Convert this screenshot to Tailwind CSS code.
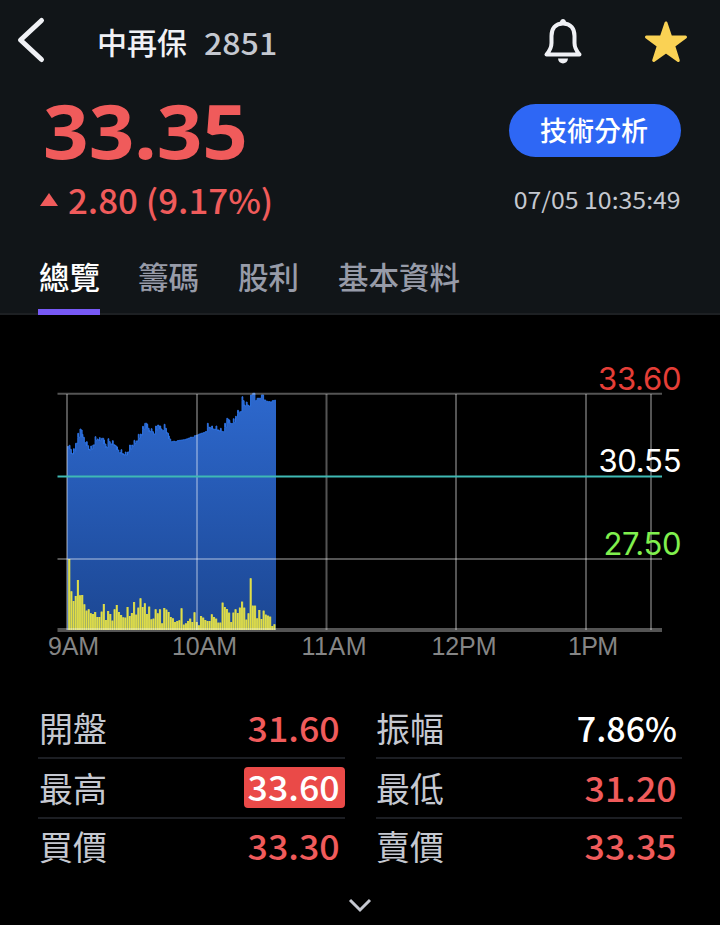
<!DOCTYPE html>
<html lang="zh-Hant">
<head>
    <meta charset="UTF-8">
    <meta name="viewport" content="width=device-width, initial-scale=1.0">
    <title>中再保 2851</title>
    <script src="https://cdn.jsdelivr.net/npm/@tailwindcss/browser@4"></script>
</head>
<body class="w-[720px] h-[925px] overflow-hidden bg-black text-white font-['Noto_Sans_CJK_TC',sans-serif]">
    <header class="h-[315px] bg-[#111518] border-b-2 border-[#1d2023]">
        <!-- title bar -->
        <div class="h-[86px] flex items-center pl-4 pr-8">
            <svg class="w-8 h-12 -mt-1.5" viewBox="0 0 32 48" fill="none" stroke="#f0f1f5" stroke-width="5" stroke-linecap="round" stroke-linejoin="round">
                <path d="M25.5 4.5L4.5 24L25.5 43.500"/>
            </svg>
            <h1 class="ml-[49px] mb-1 text-[30px] leading-none font-medium text-[#f0f1f5]">中再保</h1>
            <span class="ml-[17px] mb-0.5 text-[30px] leading-none font-medium text-[#c5c8d0] w-[73px]"><span class="inline-block origin-left scale-x-[1.07]">2851</span></span>
            <svg class="ml-auto w-10 h-[46px] -mt-1" viewBox="0 0 40 46">
                <path d="M20 5.500C12 5.500 8.500 11 8.500 18V25C8.500 30 7 32.500 3.500 36.500H36.500C33 32.500 31.500 30 31.500 25V18C31.500 11 28 5.500 20 5.500Z" fill="none" stroke="#f0f1f5" stroke-width="4" stroke-linejoin="round"/>
                <path d="M16.800 5C17 -0.300 23 -0.300 23.200 5ZM15 40.500H25C24.500 47 15.500 47 15 40.500Z" fill="#f0f1f5"/>
            </svg>
            <svg class="ml-[61px] mb-0.5 w-11 h-11" viewBox="0 0 44 44" fill="#fad254" stroke="#fad254" stroke-width="3" stroke-linejoin="round">
                <path d="M22 3L26.700 16.900L41.500 17L29.700 25.900L34.300 40.500L22 31.700L9.700 40.500L14.300 25.900L2.500 17L17.300 16.900Z"/>
            </svg>
        </div>

        <!-- price -->
        <div class="flex justify-between pl-10 pr-[39px] h-[154px]">
            <div class="text-[#f05b5b]">
                <div class="h-[92px] flex items-center pb-1"><span class="ml-[3px] inline-block origin-left scale-x-[1.05] text-[76px] leading-none font-bold font-['Noto_Sans']">33.35</span></div>
                <div class="flex items-center h-[43px]">
                    <svg class="w-[18px] h-[13px]" viewBox="0 0 18 13" fill="currentColor"><path d="M9 0L18 13H0Z"/></svg>
                    <span class="ml-2.5 inline-block origin-left scale-x-[1.04] text-[33.500px] leading-none font-medium">2.80 (9.17%)</span>
                </div>
            </div>
            <div class="flex flex-col items-end">
                <button class="mt-[18px] w-[172px] h-[53px] pb-0.5 pr-0.5 rounded-full bg-[#2e67f5] text-[27px] leading-none font-medium">技術分析</button>
                <span class="mt-[26px] inline-block origin-right scale-x-[1.08] text-[23px] leading-8 text-[#c5c8d0]">07/05 10:35:49</span>
            </div>
        </div>

        <nav class="flex gap-[39px] h-[75px] px-[38px] text-[30.500px] leading-none font-medium text-[#979ba8]">
            <a class="h-[75px] pt-[21px] pl-px -mr-px border-b-[6px] border-[#7759f5] text-white">總覽</a>
            <a class="pt-[21px]">籌碼</a>
            <a class="pt-[21px]">股利</a>
            <a class="pt-[21px]">基本資料</a>
        </nav>
    </header>

    <main>
        <svg class="block w-[720px] h-[384px]" viewBox="0 315 720 384">
            <defs>
                <linearGradient id="fill" x1="0" y1="394" x2="0" y2="630" gradientUnits="userSpaceOnUse">
                    <stop offset="0" stop-color="#2d68cd"/>
                    <stop offset="1" stop-color="#1c4793"/>
                </linearGradient>
            </defs>
            <path id="area" fill="url(#fill)"/>
            <path id="line" fill="none" stroke="#2e73e4" stroke-width="1"/>
            <g id="bars" fill="#bfc75c"></g>
            <g stroke="#fff" stroke-opacity="0.330" stroke-width="2">
                <path d="M57.500 393.700H662M57.500 559H662"/>
                <path d="M67 394V630M197 394V630M326.500 394V630M456 394V630M586 394V630M651 394V630"/>
                <path d="M57.500 630H662" stroke-width="4"/>
            </g>
            <path d="M57.500 476.500H662" stroke="#3fb9b4" stroke-width="2"/>
            <g class="font-['Liberation_Sans']" font-size="25" fill="#858585">
                <text x="48" y="655" textLength="51">9AM</text>
                <text x="172" y="655" textLength="65">10AM</text>
                <text x="301.500" y="655" textLength="65">11AM</text>
                <text x="431.500" y="655" textLength="65">12PM</text>
                <text x="568" y="655" textLength="50">1PM</text>
            </g>
            <g class="font-['Inter']" font-size="31" text-anchor="end">
                <text x="681.500" y="389.500" fill="#e53e37" textLength="83.500">33.60</text>
                <text x="681.500" y="472" fill="#fff" textLength="83">30.55</text>
                <text x="681.500" y="554.500" fill="#80f04e" textLength="78">27.50</text>
            </g>
        </svg>

        <!-- quote table -->
        <div class="grid grid-cols-[307px_306px] gap-x-[31px] pl-[38px] text-[34px] leading-none text-[#c5c8d0]">
            <div class="h-[60px] flex items-center justify-between border-b-2 border-[#1c1e23]">
                <span class="ml-px">開盤</span>
                <span class="mr-[5px] inline-block origin-right scale-x-[1.05] font-medium text-[#f05b5b]">31.60</span>
            </div>
            <div class="h-[60px] flex items-center justify-between border-b-2 border-[#1c1e23]">
                <span>振幅</span>
                <span class="mr-[5px] inline-block origin-right font-medium text-white">7.86%</span>
            </div>
            <div class="h-[60px] flex items-center justify-between border-b-2 border-[#1c1e23]">
                <span class="ml-px">最高</span>
                <span class="w-[101px] h-[41px] -mt-0.5 rounded bg-[#ea4a48] flex items-center justify-end pr-[5px]"><span class="inline-block origin-right scale-x-[1.05] font-medium text-white">33.60</span></span>
            </div>
            <div class="h-[60px] flex items-center justify-between border-b-2 border-[#1c1e23]">
                <span>最低</span>
                <span class="mr-[5px] inline-block origin-right scale-x-[1.05] font-medium text-[#f05b5b]">31.20</span>
            </div>
            <div class="h-[60px] pb-1.5 flex items-center justify-between">
                <span class="ml-px">買價</span>
                <span class="mr-[5px] inline-block origin-right scale-x-[1.05] font-medium text-[#f05b5b]">33.30</span>
            </div>
            <div class="h-[60px] pb-1.5 flex items-center justify-between">
                <span>賣價</span>
                <span class="mr-[5px] inline-block origin-right scale-x-[1.05] font-medium text-[#f05b5b]">33.35</span>
            </div>
        </div>
        <svg class="mx-auto mt-[19px] w-6 h-4" viewBox="0 0 24 16" fill="none" stroke="#c5c8d0" stroke-width="3">
            <path d="M2 2L12 12L22 2"/>
        </svg>
    </main>

    <script>
        // one value per minute from 9:00, in thirds of a pixel below y=380
        const prices = [200,208,222,215,190,172,150,172,188,197,210,207,195,182,180,182,175,192,203,185,192,194,198,210,218,221,225,225,216,207,198,190,183,175,165,148,130,145,155,155,162,150,138,147,152,145,160,177,185,184,185,182,181,180,179,177,175,172,172,167,165,162,160,158,155,142,145,147,148,150,153,154,155,142,118,130,131,128,112,100,95,62,78,75,78,45,40,62,55,55,45,60,64,65,66,62,61];
        // bar tops, in thirds of a pixel below y=550
        const volumes = [27,124,153,138,90,136,135,163,182,178,190,192,186,201,201,185,162,210,183,192,212,178,165,186,195,202,203,171,198,189,156,194,173,145,171,160,192,170,208,206,178,190,178,220,174,179,186,201,205,216,213,211,175,224,220,213,206,216,187,216,226,198,203,210,213,213,193,201,206,218,218,158,171,177,188,216,188,178,189,173,155,173,209,190,85,167,167,205,180,207,182,194,197,200,228,223];
        const step = 2.16;

        let d = '';
        prices.forEach((p, i) => {
            const y = (380 + p / 3).toFixed(1);
            const x = 67 + i * step;
            // small tick at the start of each minute, on the uneven parts of the session
            const spike = i > 48 && i < 64 || i > 84 ? 0 : [0, 3, 1, 4][i * 7 % 4];
            d += `${i ? 'L' : 'M'}${x.toFixed(1)} ${y}V${(y - spike).toFixed(1)}H${(x + 0.8).toFixed(1)}V${y}H${Math.min(x + step, 276).toFixed(1)}`;
        });
        document.getElementById('line').setAttribute('d', d);
        document.getElementById('area').setAttribute('d', d + 'V630H67Z');

        document.getElementById('bars').innerHTML = volumes.map((v, i) => {
            const top = 550 + v / 3;
            const x = 68.2 + i * step;
            return `<rect x="${x}" y="${top}" width="2.16" height="${630 - top}"/>` +
                `<rect x="${x + 0.3}" y="${top}" width="1.3" height="${630 - top}" fill="#e2de45"/>`;
        }).join('');
    </script>
</body>
</html>
